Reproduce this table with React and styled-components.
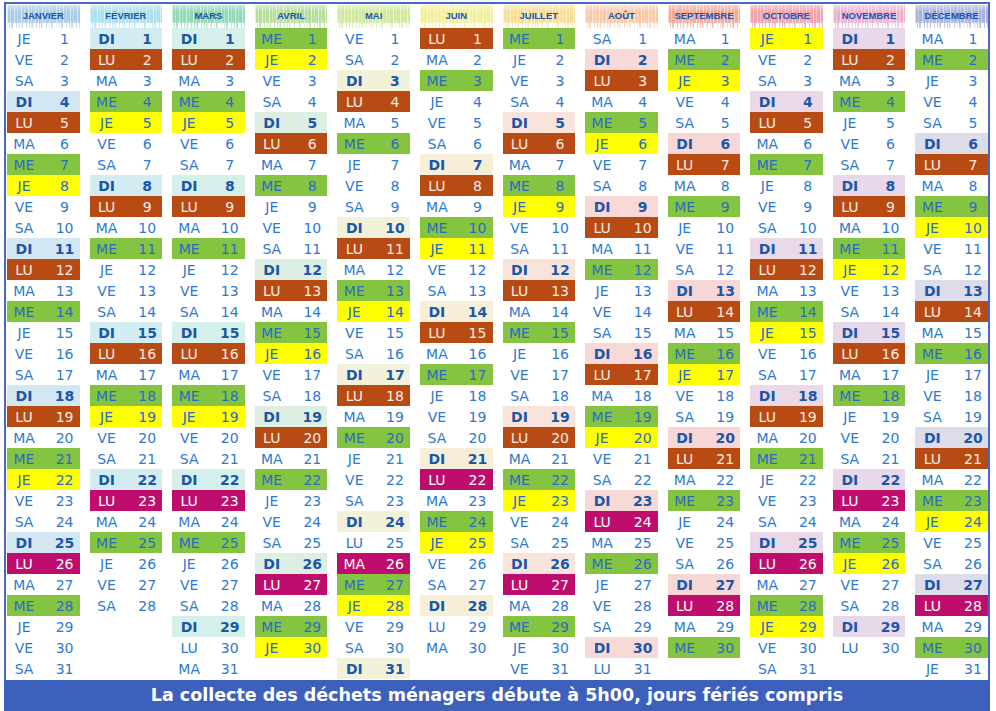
import styled, { createGlobalStyle } from "styled-components"

const GlobalStyle = createGlobalStyle`
  html, body {
    margin: 0;
    padding: 0;
    background: #ffffff;
  }
  body {
    font-family: "DejaVu Sans", "Liberation Sans", sans-serif;
  }
`

const YEAR = 2026
const DAY_NAMES = ["DI", "LU", "MA", "ME", "JE", "VE", "SA"]
// first yellow thursday of the year, then every two weeks
const FIRST_YELLOW = new Date(YEAR, 0, 8)
const WEEK = 7 * 24 * 3600 * 1000

const MONTHS = [
  { name: "JANVIER", band: "#a9cce7", sunday: "#d3e7f2" },
  { name: "FÉVRIER", band: "#acdfee", sunday: "#d2ecf1" },
  { name: "MARS", band: "#92d7b6", sunday: "#d5efea" },
  { name: "AVRIL", band: "#b6dd9c", sunday: "#ddefe2" },
  { name: "MAI", band: "#d0e99c", sunday: "#f2f2da" },
  { name: "JUIN", band: "#f2ee9c", sunday: "#f6eed7" },
  { name: "JUILLET", band: "#f7de92", sunday: "#f8e4da" },
  { name: "AOÛT", band: "#f8caa8", sunday: "#f7d9d8" },
  { name: "SEPTEMBRE", band: "#f4a898", sunday: "#f6d7d6" },
  { name: "OCTOBRE", band: "#f2a2ac", sunday: "#ecd9e7" },
  { name: "NOVEMBRE", band: "#efb0d0", sunday: "#e7d8ea" },
  { name: "DÉCEMBRE", band: "#a9b2de", sunday: "#dcdde9" },
]

const kindOf = (date) => {
  const dow = date.getDay()
  const d = date.getDate()
  const m = date.getMonth()
  // lundi de Pentecôte : collecte décalée au mardi
  if (m === 4 && d === 25) return "none"
  if (m === 4 && d === 26) return "purple"
  if (dow === 0) return "sunday"
  if (dow === 1) {
    const nth = Math.ceil(d / 7)
    if (nth < 4) return "brown"
    return nth === 4 ? "purple" : "none"
  }
  if (dow === 3) return "green"
  if (dow === 4) {
    const weeks = Math.round((date - FIRST_YELLOW) / WEEK)
    return weeks % 2 === 0 ? "yellow" : "none"
  }
  return "none"
}

const KINDS = {
  brown: { bg: "#b84b13", fg: "#fbece2" },
  purple: { bg: "#be0d6d", fg: "#ffffff" },
  green: { bg: "#85c441", fg: "#2a6bc2" },
  yellow: { bg: "#ffff00", fg: "#2a6bc2" },
  none: { bg: "transparent", fg: "#2d79d1" },
}

const Page = styled.div`
  width: 986px;
  margin: 2px 0 0 4px;
`

const Frame = styled.div`
  border: 2px solid #4767c4;
  border-bottom: 0;
  padding: 1px 0 1px 1px;
`

const MonthsGrid = styled.div`
  display: grid;
  grid-template-columns: repeat(12, 1fr);
  column-gap: 10px;
`

const MonthColumn = styled.div`
  display: flex;
  flex-direction: column;
  min-width: 0;
`

const MonthHeader = styled.div`
  position: relative;
  height: 23px;
  display: flex;
  align-items: center;
  justify-content: center;
  padding-bottom: 3px;
  box-sizing: border-box;
  font: 700 9.5px "Liberation Sans", Arial, sans-serif;
  color: #1c55ae;
  background:
    repeating-linear-gradient(
      90deg,
      rgba(255, 255, 255, 0.55) 0 1px,
      transparent 1px 3px,
      rgba(255, 255, 255, 0.3) 3px 4px,
      transparent 4px 7px
    ),
    linear-gradient(
      to bottom,
      rgba(255, 255, 255, 0.45) 0,
      rgba(255, 255, 255, 0) 30%,
      rgba(255, 255, 255, 0) 65%,
      rgba(255, 255, 255, 0.45) 100%
    ),
    ${(p) => p.$color};

  &::after {
    content: "";
    position: absolute;
    left: 0;
    right: 0;
    bottom: 0;
    height: 5px;
    background: repeating-linear-gradient(
      90deg,
      #ffffff 0 2px,
      transparent 2px 3px,
      #ffffff 3px 4px,
      transparent 4px 6px,
      #ffffff 6px 9px,
      transparent 9px 10px
    );
  }
`

const DayRow = styled.div`
  height: 21px;
  display: grid;
  grid-template-columns: 34px 1fr 30px;
  align-items: center;
  font-size: 14px;
  font-weight: ${(p) => (p.$kind === "sunday" ? 700 : 400)};
  color: ${(p) => (p.$kind === "sunday" ? "#1a57aa" : KINDS[p.$kind].fg)};
  background: ${(p) => (p.$kind === "sunday" ? p.$sunday : KINDS[p.$kind].bg)};
`

const DayName = styled.span`
  grid-column: 1;
  text-align: center;
`

const DayNum = styled.span`
  grid-column: 3;
  text-align: center;
`

const Footer = styled.div`
  height: 30px;
  display: flex;
  align-items: center;
  justify-content: center;
  padding-bottom: 2px;
  background: #3d60bd;
  color: #ffffff;
  font: 700 17.5px "DejaVu Sans", "Open Sans", sans-serif;
`

const daysOf = (month) => {
  const count = new Date(YEAR, month + 1, 0).getDate()
  return Array.from({ length: count }, (_, i) => new Date(YEAR, month, i + 1))
}

const Month = ({ index, month }) => (
  <MonthColumn>
    <MonthHeader $color={month.band}>{month.name}</MonthHeader>
    {daysOf(index).map((date) => (
      <DayRow key={date.getDate()} $kind={kindOf(date)} $sunday={month.sunday}>
        <DayName>{DAY_NAMES[date.getDay()]}</DayName>
        <DayNum>{date.getDate()}</DayNum>
      </DayRow>
    ))}
  </MonthColumn>
)

const App = () => (
  <>
    <GlobalStyle />
    <Page>
      <Frame>
        <MonthsGrid>
          {MONTHS.map((month, i) => (
            <Month key={month.name} index={i} month={month} />
          ))}
        </MonthsGrid>
      </Frame>
      <Footer>La collecte des déchets ménagers débute à 5h00, jours fériés compris</Footer>
    </Page>
  </>
)

export default App
